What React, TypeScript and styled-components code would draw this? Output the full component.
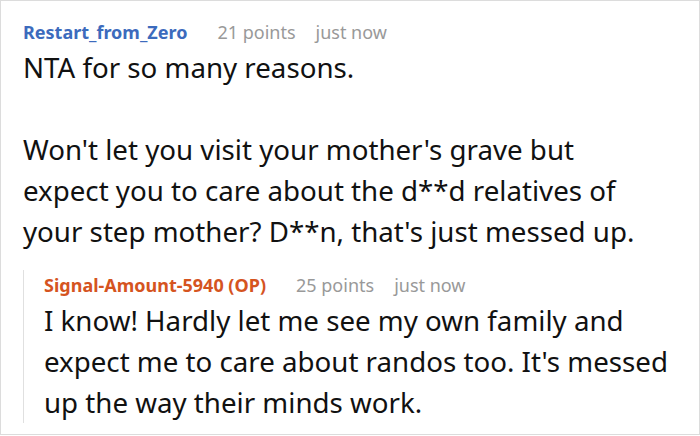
import React from "react";
import styled, { createGlobalStyle } from "styled-components";

const Global = createGlobalStyle`
  html, body { margin: 0; padding: 0; background: #fff; }
  body { font-family: "Noto Sans", "Open Sans", sans-serif; }
`;

const Frame = styled.div`
  box-sizing: border-box;
  width: 700px;
  height: 435px;
  border: 1px solid #dcdcdc;
  padding: 16px 12px 0 22px;
  overflow: hidden;
`;

const Meta = styled.div`
  display: flex;
  align-items: baseline;
  font-size: 18px;
  line-height: 30px;
  color: #999;
  white-space: nowrap;
`;

const Author = styled.span<{ $op?: boolean }>`
  font-weight: 700;
  color: ${(p) => (p.$op ? "#d5541f" : "#3c6bbd")};
  margin-right: 30px;
`;

const Points = styled.span`
  margin-right: 20px;
`;

const Body = styled.div<{ $inset: number }>`
  font-size: 27.7px;
  line-height: 41px;
  color: #111;
  padding-right: ${(p) => p.$inset}px;
`;

const Reply = styled.div`
  margin-top: 18px;
  border-left: 1px solid #e0e0e0;
  padding-left: 20px;
`;

type CommentProps = {
  author: string;
  points: string;
  op?: boolean;
  inset?: number;
  children: React.ReactNode;
};

function Comment({ author, points, op, inset = 0, children }: CommentProps) {
  return (
    <>
      <Meta>
        <Author $op={op}>{author}</Author>
        <Points>{points}</Points>
        <span>just now</span>
      </Meta>
      <Body $inset={inset}>{children}</Body>
    </>
  );
}

export default function App() {
  return (
    <>
      <Global />
      <Frame>
        <Comment author="Restart_from_Zero" points="21 points" inset={26}>
          NTA for so many reasons.
          <br />
          <br />
          Won't let you visit your mother's grave but expect you to care about the d**d relatives of your step mother? D**n, that's just messed up.
        </Comment>
        <Reply>
          <Comment author="Signal-Amount-5940 (OP)" points="25 points" op>
            I know! Hardly let me see my own family and expect me to care about randos too. It's messed up the way their minds work.
          </Comment>
        </Reply>
      </Frame>
    </>
  );
}
